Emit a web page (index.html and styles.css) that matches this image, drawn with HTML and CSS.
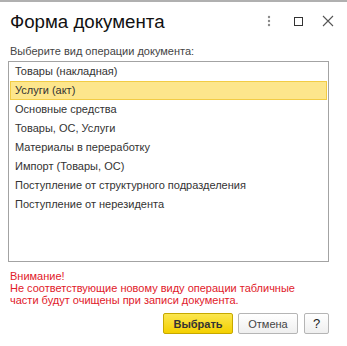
FILE: index.html
```html
<!DOCTYPE html>
<html lang="ru">
<head>
<meta charset="utf-8">
<title>Форма документа</title>
<link rel="stylesheet" href="styles.css">
</head>
<body>
<div class="window">
  <div class="header">
    <div class="title">Форма документа</div>
    <div class="tools">
      <svg class="icon kebab" width="4" height="12" viewBox="0 0 4 12"><circle cx="2" cy="2" r="1.2"/><circle cx="2" cy="6" r="1.2"/><circle cx="2" cy="10" r="1.2"/></svg>
      <svg class="icon square" width="11" height="11" viewBox="0 0 11 11"><rect x="1.5" y="1.5" width="8" height="8"/></svg>
      <svg class="icon close" width="12" height="12" viewBox="0 0 12 12"><path d="M1 1 L11 11 M11 1 L1 11"/></svg>
    </div>
  </div>
  <div class="content">
    <div class="label">Выберите вид операции документа:</div>
    <div class="list">
      <div class="row">Товары (накладная)</div>
      <div class="row selected">Услуги (акт)</div>
      <div class="row">Основные средства</div>
      <div class="row">Товары, ОС, Услуги</div>
      <div class="row">Материалы в переработку</div>
      <div class="row">Импорт (Товары, ОС)</div>
      <div class="row">Поступление от структурного подразделения</div>
      <div class="row">Поступление от нерезидента</div>
    </div>
    <div class="warning">
      <div>Внимание!</div>
      <div>Не соответствующие новому виду операции табличные</div>
      <div>части будут очищены при записи документа.</div>
    </div>
    <div class="buttons">
      <button class="btn primary">Выбрать</button>
      <button class="btn cancel">Отмена</button>
      <button class="btn help">?</button>
    </div>
  </div>
</div>
</body>
</html>
```
FILE: styles.css
```css
html, body {
  margin: 0;
  padding: 0;
  background: #ffffff;
}
body {
  font-family: "Liberation Sans", Arial, sans-serif;
  width: 347px;
  height: 346px;
  overflow: hidden;
}
.window {
  border-top: 2px solid #b0b0b0;
  height: 344px;
  display: flex;
  flex-direction: column;
}
.header {
  display: flex;
  align-items: flex-start;
  justify-content: space-between;
  padding: 9px 0 0 10px;
  height: 23px;
}
.title {
  font-size: 18.7px;
  line-height: 22px;
  color: #111;
}
.tools {
  display: flex;
  align-items: center;
  padding-top: 4px;
}
.icon {
  display: block;
}
.kebab {
  fill: #8a8a8a;
  margin-right: 22px;
}
.square {
  fill: none;
  stroke: #333;
  stroke-width: 1;
  margin-right: 18px;
}
.close {
  fill: none;
  stroke: #555;
  stroke-width: 1.1;
  margin-right: 13px;
}
.content {
  display: flex;
  flex-direction: column;
  padding: 0 18px 0 8px;
}
.label {
  font-size: 11px;
  line-height: 13px;
  color: #444;
  padding-left: 2px;
  margin-top: 11px;
}
.list {
  margin-top: 3px;
  height: 199px;
  border: 1px solid #a3a3a3;
  display: flex;
  flex-direction: column;
}
.row {
  height: 19px;
  line-height: 19px;
  font-size: 11px;
  color: #333;
  padding-left: 5px;
  margin: 0 1px;
  box-sizing: border-box;
}
.row.selected {
  background: #fde68c;
  border: 1px solid #f2cc45;
  line-height: 17px;
  padding-left: 4px;
}
.warning {
  margin-top: 8px;
  padding-left: 2px;
  font-size: 11px;
  line-height: 12px;
  color: #e1202a;
}
.buttons {
  display: flex;
  justify-content: flex-end;
  margin-top: 7px;
  gap: 5px;
}
.btn {
  height: 21px;
  font-family: "Liberation Sans", Arial, sans-serif;
  font-size: 11px;
  padding: 0;
  border-radius: 2px;
  cursor: default;
}
.primary {
  width: 70px;
  font-weight: bold;
  color: #333;
  background: linear-gradient(#fbe64f, #f4d000);
  border: 1px solid #c6a800;
}
.cancel {
  width: 60px;
  color: #444;
  background: linear-gradient(#ffffff, #efefef);
  border: 1px solid #b5b5b5;
}
.help {
  width: 25px;
  margin-left: 1px;
  font-size: 13px;
  color: #222;
  background: linear-gradient(#ffffff, #efefef);
  border: 1px solid #b5b5b5;
}
```
